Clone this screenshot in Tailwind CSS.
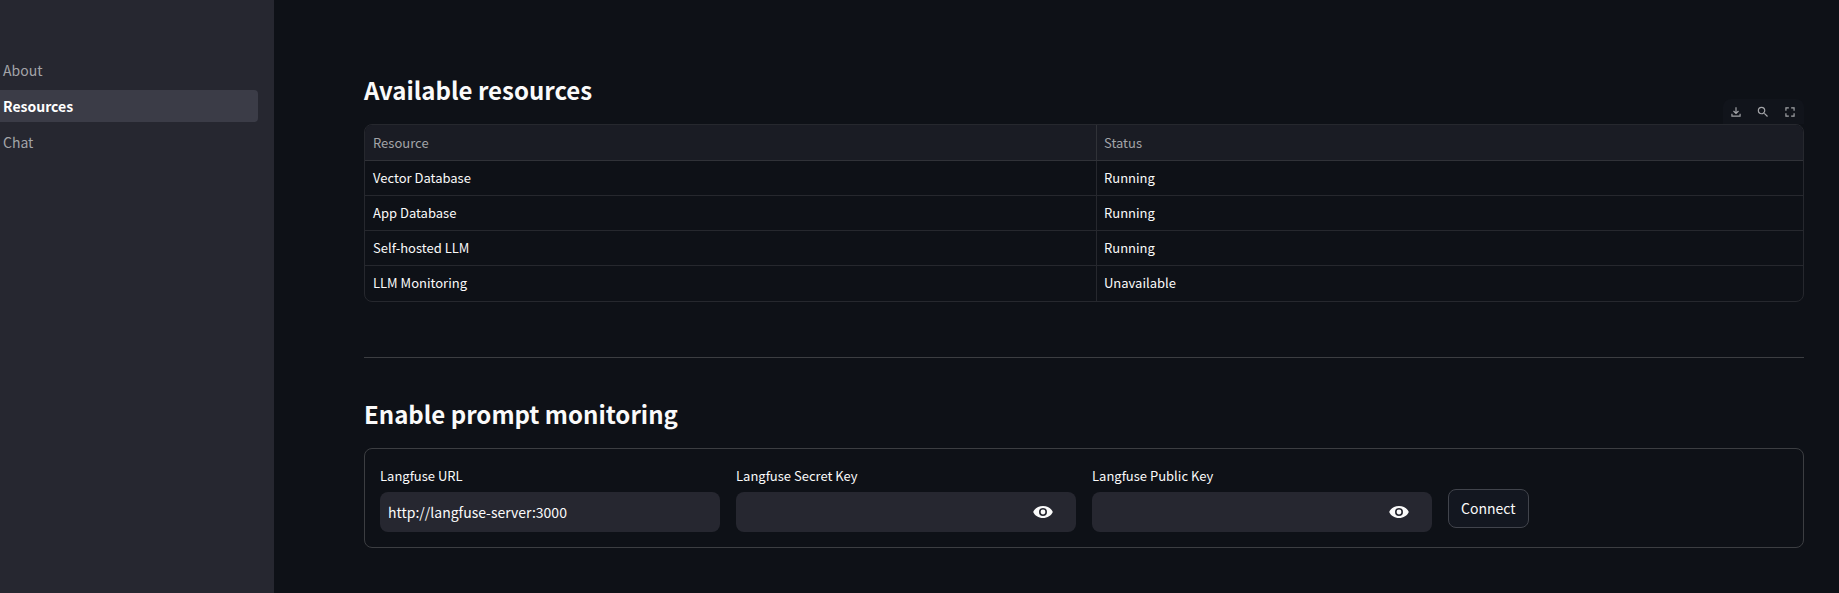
<!DOCTYPE html>
<html lang="en">
<head>
<meta charset="utf-8">
<title>Resources</title>
<script src="https://cdn.jsdelivr.net/npm/@tailwindcss/browser@4"></script>
</head>
<body class="flex min-h-screen bg-[#0e1117] font-['Noto_Sans_CJK_SC',sans-serif] text-[#fafafa]">
  <nav class="flex w-[274px] shrink-0 flex-col gap-1 bg-[#262730] pt-[54px] pr-4 text-[14px] leading-8 text-[#a3a4a8]">
    <a href="#about" class="h-8 pl-[3px]">About</a>
    <a href="#resources" aria-current="page" class="h-8 rounded-r bg-[#3b3c47] pl-[3px] font-bold text-white">Resources</a>
    <a href="#chat" class="h-8 pl-[3px]">Chat</a>
  </nav>
  <main class="min-w-0 flex-1 pt-[72px] pr-[35px] pb-11 pl-[90px]">
    <div class="flex items-end justify-between">
      <h2 class="pb-4 text-[24px] leading-9 font-bold">Available resources</h2>
      <div class="flex h-[25px] items-center gap-[13px] rounded-t-lg bg-[#11141b] pr-[7px] pl-[6px] text-[#a3a4a8]">
        <button aria-label="Download" class="size-[14px]"><svg viewBox="0 0 24 24" fill="currentColor" class="size-[14px]"><path d="M12 16l-5-5 1.4-1.45 2.6 2.6V4h2v8.150l2.6-2.6L17 11zM4 20v-5h2v3h12v-3h2v5z"/></svg></button>
        <button aria-label="Search" class="size-[14px]"><svg viewBox="0 0 24 24" fill="currentColor" class="size-[14px]"><path d="M15.5 14h-.79l-.28-.27A6.471 6.471 0 0 0 16 9.500 6.500 6.500 0 1 0 9.500 16c1.610 0 3.090-.59 4.230-1.570l.27.28v.79l5 4.990L20.490 19l-4.990-5zm-6 0C7.010 14 5 11.990 5 9.500S7.010 5 9.500 5 14 7.010 14 9.500 11.990 14 9.500 14z"/></svg></button>
        <button aria-label="Fullscreen" class="size-[14px]"><svg viewBox="0 0 24 24" fill="currentColor" class="size-[14px]"><path d="M4 4h6v2H6v4H4zM14 4h6v6h-2V6h-4zM4 14h2v4h4v2H4zM18 14h2v6h-6v-2h4z"/></svg></button>
      </div>
    </div>
    <div class="overflow-hidden rounded-lg border border-[#26282e]">
      <table class="w-full table-fixed border-separate border-spacing-0 text-left text-[13px] leading-[34px]">
        <colgroup><col class="w-[732px]"><col></colgroup>
        <thead class="bg-[#1a1c24] text-[#a3a4a8]">
          <tr>
            <th scope="col" class="h-9 border-r border-b border-[#303238] px-2 py-0 font-normal">Resource</th>
            <th scope="col" class="h-9 border-b border-[#303238] px-[7px] py-0 font-normal">Status</th>
          </tr>
        </thead>
        <tbody>
          <tr><td class="border-r border-b border-[#26282e] px-2 py-0">Vector Database</td><td class="border-b border-[#26282e] px-[7px] py-0">Running</td></tr>
          <tr><td class="border-r border-b border-[#26282e] px-2 py-0">App Database</td><td class="border-b border-[#26282e] px-[7px] py-0">Running</td></tr>
          <tr><td class="border-r border-b border-[#26282e] px-2 py-0">Self-hosted LLM</td><td class="border-b border-[#26282e] px-[7px] py-0">Running</td></tr>
          <tr><td class="h-[35px] border-r border-[#26282e] px-2 py-0 align-top">LLM Monitoring</td><td class="px-[7px] py-0 align-top">Unavailable</td></tr>
        </tbody>
      </table>
    </div>
    <hr class="mt-[55px] border-[#3c3e42]">
    <h2 class="mt-[38px] mb-4 text-[24px] leading-9 font-bold">Enable prompt monitoring</h2>
    <form class="grid grid-cols-4 gap-4 rounded-lg border border-[#3c3e42] p-[15px]">
      <div>
        <label for="url" class="block pb-1 text-[13px] leading-6">Langfuse URL</label>
        <input id="url" type="text" value="http://langfuse-server:3000" class="h-10 w-full rounded-lg bg-[#262730] px-2 text-[14px] outline-none">
      </div>
      <div>
        <label for="secret" class="block pb-1 text-[13px] leading-6">Langfuse Secret Key</label>
        <div class="flex h-10 items-center rounded-lg bg-[#262730] pr-[22px]">
          <input id="secret" type="password" class="h-10 min-w-0 flex-1 bg-transparent px-2 text-[14px] outline-none">
          <button type="button" aria-label="Show secret key"><svg viewBox="0 0 22 14" fill="currentColor" fill-rule="evenodd" class="h-[14px] w-[22px]"><path d="M11 1C6.500 1 2.700 3.500 1.200 7c1.500 3.500 5.300 6 9.800 6s8.300-2.500 9.800-6C19.300 3.500 15.500 1 11 1zm0 10a4 4 0 1 1 0-8 4 4 0 0 1 0 8zm0-1.600a2.400 2.400 0 1 0 0-4.800 2.400 2.400 0 0 0 0 4.800z"/></svg></button>
        </div>
      </div>
      <div>
        <label for="public" class="block pb-1 text-[13px] leading-6">Langfuse Public Key</label>
        <div class="flex h-10 items-center rounded-lg bg-[#262730] pr-[22px]">
          <input id="public" type="password" class="h-10 min-w-0 flex-1 bg-transparent px-2 text-[14px] outline-none">
          <button type="button" aria-label="Show public key"><svg viewBox="0 0 22 14" fill="currentColor" fill-rule="evenodd" class="h-[14px] w-[22px]"><path d="M11 1C6.500 1 2.700 3.500 1.200 7c1.500 3.500 5.300 6 9.800 6s8.300-2.500 9.800-6C19.300 3.500 15.500 1 11 1zm0 10a4 4 0 1 1 0-8 4 4 0 0 1 0 8zm0-1.600a2.400 2.400 0 1 0 0-4.800 2.400 2.400 0 0 0 0 4.800z"/></svg></button>
        </div>
      </div>
      <div class="pt-[25px]">
        <button type="button" class="h-[39px] rounded-lg border border-[#41444c] bg-[#131720] px-3 text-[14px]">Connect</button>
      </div>
    </form>
  </main>
</body>
</html>
